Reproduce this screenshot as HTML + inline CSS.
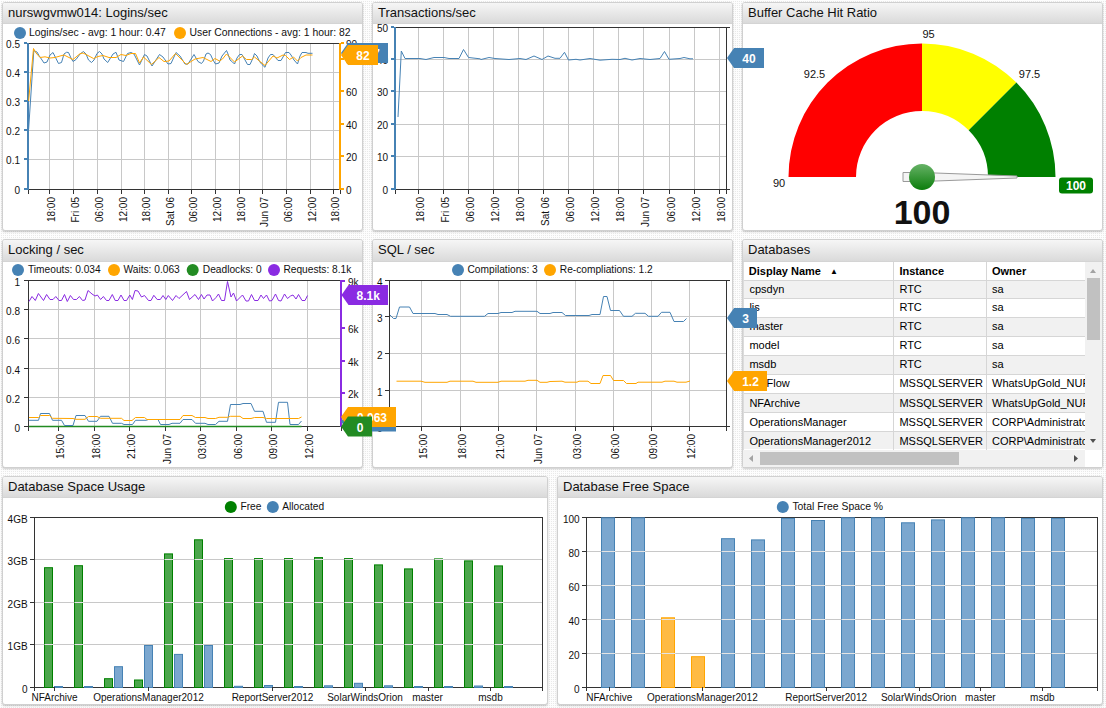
<!DOCTYPE html>
<html><head><meta charset="utf-8">
<style>
html,body{margin:0;padding:0}
body{width:1106px;height:708px;overflow:hidden;position:relative;font-family:"Liberation Sans",sans-serif;
background:#fbfbfb conic-gradient(from 90deg at 1px 1px,#e9e9e9 90deg,#fdfdfd 0) 0 0/2px 2px;}
.p{position:absolute;box-sizing:border-box;border:1px solid #d0d0d0;border-radius:3px;background:#fff;box-shadow:0 1px 2px rgba(0,0,0,.2);overflow:hidden}
.h{position:absolute;left:0;top:0;right:0;height:20px;background:linear-gradient(#f6f6f6,#dadada);border-bottom:1px solid #d4d4d4;font-size:13px;line-height:20px;padding-left:5px;color:#111;white-space:nowrap}
svg text{font-family:"Liberation Sans",sans-serif}
table.t{border-collapse:collapse;table-layout:fixed;font-size:11px;color:#1a1a1a}
table.t td{height:18px;padding:0 0 0 6px;border:1px solid #d6d6d6;border-top:0;white-space:nowrap;overflow:hidden;line-height:18px}
table.t tr td:first-child{border-left:0}
table.t tr.hd td{font-weight:bold;background:#fff}
</style></head><body>
<div class="p" style="left:2px;top:2px;width:361px;height:229px"><div class="h">nurswgvmw014: Logins/sec</div></div>
<div class="p" style="left:372px;top:2px;width:361px;height:229px"><div class="h">Transactions/sec</div></div>
<div class="p" style="left:742px;top:2px;width:361px;height:229px"><div class="h">Buffer Cache Hit Ratio</div></div>
<div class="p" style="left:2px;top:239px;width:361px;height:229px"><div class="h" style="height:21px">Locking / sec</div></div>
<div class="p" style="left:372px;top:239px;width:361px;height:229px"><div class="h" style="height:21px">SQL / sec</div></div>
<div class="p" style="left:742px;top:239px;width:361px;height:229px"><div class="h" style="height:21px">Databases</div></div>
<div class="p" style="left:2px;top:476px;width:546px;height:229px"><div class="h">Database Space Usage</div></div>
<div class="p" style="left:557px;top:476px;width:546px;height:229px"><div class="h">Database Free Space</div></div>
<div style="position:absolute;left:743px;top:262px;width:342px;height:188px;overflow:hidden;background:#fff;font-size:11px;color:#000;box-sizing:border-box;border-left:1px solid #dcdcdc">
<div style="position:absolute;left:4.8px;top:3.1px;font-weight:bold;white-space:nowrap;line-height:12px">Display Name<span style="font-size:8px;margin-left:9px;position:relative;top:-1px">&#9650;</span></div>
<div style="position:absolute;left:155.4px;top:3.1px;font-weight:bold;line-height:12px">Instance</div>
<div style="position:absolute;left:248px;top:3.1px;font-weight:bold;line-height:12px">Owner</div>
<div style="position:absolute;left:0;top:19px;width:341px;height:17px;background:#f1f1f1"></div>
<div style="position:absolute;left:5.4px;top:20.8px;white-space:nowrap;line-height:12px">cpsdyn</div>
<div style="position:absolute;left:155.4px;top:20.8px;white-space:nowrap;line-height:12px">RTC</div>
<div style="position:absolute;left:248.0px;top:20.8px;white-space:nowrap;line-height:12px">sa</div>
<div style="position:absolute;left:5.4px;top:38.9px;white-space:nowrap;line-height:12px">lis</div>
<div style="position:absolute;left:155.4px;top:38.9px;white-space:nowrap;line-height:12px">RTC</div>
<div style="position:absolute;left:248.0px;top:38.9px;white-space:nowrap;line-height:12px">sa</div>
<div style="position:absolute;left:0;top:56px;width:341px;height:18px;background:#f1f1f1"></div>
<div style="position:absolute;left:5.4px;top:58.0px;white-space:nowrap;line-height:12px">master</div>
<div style="position:absolute;left:155.4px;top:58.0px;white-space:nowrap;line-height:12px">RTC</div>
<div style="position:absolute;left:248.0px;top:58.0px;white-space:nowrap;line-height:12px">sa</div>
<div style="position:absolute;left:5.4px;top:77.2px;white-space:nowrap;line-height:12px">model</div>
<div style="position:absolute;left:155.4px;top:77.2px;white-space:nowrap;line-height:12px">RTC</div>
<div style="position:absolute;left:248.0px;top:77.2px;white-space:nowrap;line-height:12px">sa</div>
<div style="position:absolute;left:0;top:94px;width:341px;height:18px;background:#f1f1f1"></div>
<div style="position:absolute;left:5.4px;top:96.3px;white-space:nowrap;line-height:12px">msdb</div>
<div style="position:absolute;left:155.4px;top:96.3px;white-space:nowrap;line-height:12px">RTC</div>
<div style="position:absolute;left:248.0px;top:96.3px;white-space:nowrap;line-height:12px">sa</div>
<div style="position:absolute;left:5.4px;top:115.4px;white-space:nowrap;line-height:12px">NetFlow</div>
<div style="position:absolute;left:155.4px;top:115.4px;white-space:nowrap;line-height:12px">MSSQLSERVER</div>
<div style="position:absolute;left:248.0px;top:115.4px;white-space:nowrap;line-height:12px">WhatsUpGold_NUR</div>
<div style="position:absolute;left:0;top:132px;width:341px;height:18px;background:#f1f1f1"></div>
<div style="position:absolute;left:5.4px;top:134.5px;white-space:nowrap;line-height:12px">NFArchive</div>
<div style="position:absolute;left:155.4px;top:134.5px;white-space:nowrap;line-height:12px">MSSQLSERVER</div>
<div style="position:absolute;left:248.0px;top:134.5px;white-space:nowrap;line-height:12px">WhatsUpGold_NUR</div>
<div style="position:absolute;left:5.4px;top:153.6px;white-space:nowrap;line-height:12px">OperationsManager</div>
<div style="position:absolute;left:155.4px;top:153.6px;white-space:nowrap;line-height:12px">MSSQLSERVER</div>
<div style="position:absolute;left:248.0px;top:153.6px;white-space:nowrap;line-height:12px">CORP\Administrator</div>
<div style="position:absolute;left:0;top:170px;width:341px;height:17px;background:#f1f1f1"></div>
<div style="position:absolute;left:5.4px;top:172.8px;white-space:nowrap;line-height:12px">OperationsManager2012</div>
<div style="position:absolute;left:155.4px;top:172.8px;white-space:nowrap;line-height:12px">MSSQLSERVER</div>
<div style="position:absolute;left:248.0px;top:172.8px;white-space:nowrap;line-height:12px">CORP\Administrator</div>
<div style="position:absolute;left:5.4px;top:190.9px;white-space:nowrap;line-height:12px">ReportServer</div>
<div style="position:absolute;left:155.4px;top:190.9px;white-space:nowrap;line-height:12px">MSSQLSERVER</div>
<div style="position:absolute;left:248.0px;top:190.9px;white-space:nowrap;line-height:12px">CORP\Administrator</div>
<div style="position:absolute;left:0;top:18px;width:342px;height:1px;background:#d6d6d6"></div>
<div style="position:absolute;left:0;top:36px;width:342px;height:1px;background:#d6d6d6"></div>
<div style="position:absolute;left:0;top:55px;width:342px;height:1px;background:#d6d6d6"></div>
<div style="position:absolute;left:0;top:74px;width:342px;height:1px;background:#d6d6d6"></div>
<div style="position:absolute;left:0;top:93px;width:342px;height:1px;background:#d6d6d6"></div>
<div style="position:absolute;left:0;top:112px;width:342px;height:1px;background:#d6d6d6"></div>
<div style="position:absolute;left:0;top:131px;width:342px;height:1px;background:#d6d6d6"></div>
<div style="position:absolute;left:0;top:150px;width:342px;height:1px;background:#d6d6d6"></div>
<div style="position:absolute;left:0;top:169px;width:342px;height:1px;background:#d6d6d6"></div>
<div style="position:absolute;left:149px;top:0;width:1px;height:188px;background:#d6d6d6"></div>
<div style="position:absolute;left:242px;top:0;width:1px;height:188px;background:#d6d6d6"></div>
</div>
<div style="position:absolute;left:1085px;top:262px;width:17px;height:188px;background:#f1f1f1"></div>
<div style="position:absolute;left:1087px;top:278px;width:13px;height:62px;background:#c1c1c1"></div>
<div style="position:absolute;left:743px;top:450px;width:342px;height:17px;background:#f1f1f1"></div>
<div style="position:absolute;left:760px;top:452px;width:199px;height:13px;background:#c1c1c1"></div>
<div style="position:absolute;left:1085px;top:450px;width:17px;height:17px;background:#fff"></div>
<svg style="position:absolute;left:0;top:0" width="1106" height="708">
<polygon points="1090,273 1096,273 1093,269" fill="#a3a3a3"/>
<polygon points="1090,439 1096,439 1093,443" fill="#505050"/>
<polygon points="753,455 753,462 749,458.5" fill="#a3a3a3"/>
<polygon points="1074,455 1074,462 1078,458.5" fill="#505050"/>
</svg>
<svg id="ov" style="position:absolute;left:0;top:0" width="1106" height="708"><circle cx="20" cy="33" r="6" fill="#4682b4"/>
<text x="29.00" y="35.70" font-size="10.4" text-anchor="start" fill="#111" >Logins/sec - avg: 1 hour: 0.47</text>
<circle cx="180" cy="33" r="6" fill="#ffa500"/>
<text x="189.50" y="35.70" font-size="10.4" text-anchor="start" fill="#111" >User Connections - avg: 1 hour: 82</text>
<line x1="28" y1="72.5" x2="340" y2="72.5" stroke="#c8c8c8" stroke-width="1"/>
<line x1="28" y1="101.5" x2="340" y2="101.5" stroke="#c8c8c8" stroke-width="1"/>
<line x1="28" y1="130.5" x2="340" y2="130.5" stroke="#c8c8c8" stroke-width="1"/>
<line x1="28" y1="159.5" x2="340" y2="159.5" stroke="#c8c8c8" stroke-width="1"/>
<line x1="49.5" y1="43" x2="49.5" y2="189" stroke="#c8c8c8" stroke-width="1"/>
<line x1="73.5" y1="43" x2="73.5" y2="189" stroke="#c8c8c8" stroke-width="1"/>
<line x1="97.5" y1="43" x2="97.5" y2="189" stroke="#c8c8c8" stroke-width="1"/>
<line x1="121.5" y1="43" x2="121.5" y2="189" stroke="#c8c8c8" stroke-width="1"/>
<line x1="144.5" y1="43" x2="144.5" y2="189" stroke="#c8c8c8" stroke-width="1"/>
<line x1="168.5" y1="43" x2="168.5" y2="189" stroke="#c8c8c8" stroke-width="1"/>
<line x1="191.5" y1="43" x2="191.5" y2="189" stroke="#c8c8c8" stroke-width="1"/>
<line x1="215.5" y1="43" x2="215.5" y2="189" stroke="#c8c8c8" stroke-width="1"/>
<line x1="239.5" y1="43" x2="239.5" y2="189" stroke="#c8c8c8" stroke-width="1"/>
<line x1="262.5" y1="43" x2="262.5" y2="189" stroke="#c8c8c8" stroke-width="1"/>
<line x1="286.5" y1="43" x2="286.5" y2="189" stroke="#c8c8c8" stroke-width="1"/>
<line x1="310.5" y1="43" x2="310.5" y2="189" stroke="#c8c8c8" stroke-width="1"/>
<line x1="333.5" y1="43" x2="333.5" y2="189" stroke="#c8c8c8" stroke-width="1"/>
<line x1="28" y1="43.5" x2="340" y2="43.5" stroke="#333" stroke-width="1"/>
<line x1="28" y1="189.5" x2="341" y2="189.5" stroke="#333" stroke-width="1"/>
<line x1="28.5" y1="189" x2="28.5" y2="194" stroke="#333" stroke-width="1"/>
<line x1="49.5" y1="189" x2="49.5" y2="194" stroke="#333" stroke-width="1"/>
<line x1="73.5" y1="189" x2="73.5" y2="194" stroke="#333" stroke-width="1"/>
<line x1="97.5" y1="189" x2="97.5" y2="194" stroke="#333" stroke-width="1"/>
<line x1="121.5" y1="189" x2="121.5" y2="194" stroke="#333" stroke-width="1"/>
<line x1="144.5" y1="189" x2="144.5" y2="194" stroke="#333" stroke-width="1"/>
<line x1="168.5" y1="189" x2="168.5" y2="194" stroke="#333" stroke-width="1"/>
<line x1="191.5" y1="189" x2="191.5" y2="194" stroke="#333" stroke-width="1"/>
<line x1="215.5" y1="189" x2="215.5" y2="194" stroke="#333" stroke-width="1"/>
<line x1="239.5" y1="189" x2="239.5" y2="194" stroke="#333" stroke-width="1"/>
<line x1="262.5" y1="189" x2="262.5" y2="194" stroke="#333" stroke-width="1"/>
<line x1="286.5" y1="189" x2="286.5" y2="194" stroke="#333" stroke-width="1"/>
<line x1="310.5" y1="189" x2="310.5" y2="194" stroke="#333" stroke-width="1"/>
<line x1="333.5" y1="189" x2="333.5" y2="194" stroke="#333" stroke-width="1"/>
<line x1="340.5" y1="189" x2="340.5" y2="194" stroke="#333" stroke-width="1"/>
<text transform="translate(54.50,197.00) rotate(-90)" font-size="10" text-anchor="end" fill="#111">18:00</text>
<text transform="translate(78.50,197.00) rotate(-90)" font-size="10" text-anchor="end" fill="#111">Fri 05</text>
<text transform="translate(102.50,197.00) rotate(-90)" font-size="10" text-anchor="end" fill="#111">06:00</text>
<text transform="translate(126.50,197.00) rotate(-90)" font-size="10" text-anchor="end" fill="#111">12:00</text>
<text transform="translate(149.50,197.00) rotate(-90)" font-size="10" text-anchor="end" fill="#111">18:00</text>
<text transform="translate(173.50,197.00) rotate(-90)" font-size="10" text-anchor="end" fill="#111">Sat 06</text>
<text transform="translate(196.50,197.00) rotate(-90)" font-size="10" text-anchor="end" fill="#111">06:00</text>
<text transform="translate(220.50,197.00) rotate(-90)" font-size="10" text-anchor="end" fill="#111">12:00</text>
<text transform="translate(244.50,197.00) rotate(-90)" font-size="10" text-anchor="end" fill="#111">18:00</text>
<text transform="translate(267.50,197.00) rotate(-90)" font-size="10" text-anchor="end" fill="#111">Jun 07</text>
<text transform="translate(291.50,197.00) rotate(-90)" font-size="10" text-anchor="end" fill="#111">06:00</text>
<text transform="translate(315.50,197.00) rotate(-90)" font-size="10" text-anchor="end" fill="#111">12:00</text>
<text transform="translate(338.50,197.00) rotate(-90)" font-size="10" text-anchor="end" fill="#111">18:00</text>
<rect x="27" y="43" width="2" height="147" fill="#4682b4" />
<rect x="24" y="42" width="3" height="2" fill="#4682b4" />
<text x="20.00" y="48.10" font-size="10" text-anchor="end" fill="#111" >0.5</text>
<rect x="24" y="71" width="3" height="2" fill="#4682b4" />
<text x="20.00" y="77.10" font-size="10" text-anchor="end" fill="#111" >0.4</text>
<rect x="24" y="100" width="3" height="2" fill="#4682b4" />
<text x="20.00" y="106.10" font-size="10" text-anchor="end" fill="#111" >0.3</text>
<rect x="24" y="129" width="3" height="2" fill="#4682b4" />
<text x="20.00" y="135.10" font-size="10" text-anchor="end" fill="#111" >0.2</text>
<rect x="24" y="158" width="3" height="2" fill="#4682b4" />
<text x="20.00" y="164.10" font-size="10" text-anchor="end" fill="#111" >0.1</text>
<rect x="24" y="188" width="3" height="2" fill="#4682b4" />
<text x="20.00" y="194.10" font-size="10" text-anchor="end" fill="#111" >0</text>
<rect x="339" y="43" width="2" height="147" fill="#ffa500" />
<rect x="341" y="188" width="3" height="2" fill="#ffa500" />
<text x="346.00" y="193.80" font-size="10" text-anchor="start" fill="#111" >0</text>
<rect x="341" y="155" width="3" height="2" fill="#ffa500" />
<text x="346.00" y="160.80" font-size="10" text-anchor="start" fill="#111" >20</text>
<rect x="341" y="123" width="3" height="2" fill="#ffa500" />
<text x="346.00" y="128.80" font-size="10" text-anchor="start" fill="#111" >40</text>
<rect x="341" y="90" width="3" height="2" fill="#ffa500" />
<text x="346.00" y="95.80" font-size="10" text-anchor="start" fill="#111" >60</text>
<rect x="341" y="58" width="3" height="2" fill="#ffa500" />
<text x="346.00" y="63.80" font-size="10" text-anchor="start" fill="#111" >80</text>
<rect x="341" y="42" width="3" height="2" fill="#ffa500" />
<text x="346.00" y="47.80" font-size="10" text-anchor="start" fill="#111" >90</text>
<polyline points="28.6,129.5 33.8,50.7 37.0,52.0 39.0,55.5 44.0,63.0 47.0,62.0 50.0,55.0 53.0,52.5 55.5,57.5 58.5,63.5 61.5,62.5 64.0,54.0 66.5,52.3 68.5,52.5 71.0,58.0 73.0,61.5 76.0,59.5 80.0,54.0 83.5,51.5 86.0,54.0 88.5,60.0 91.5,62.5 94.0,60.0 97.0,53.5 99.5,51.5 102.0,54.0 104.0,59.0 107.7,62.5 113.0,54.0 116.0,52.3 119.0,60.0 123.5,61.5 127.5,53.5 131.0,52.5 134.0,54.0 139.5,65.0 144.5,54.5 147.0,56.0 152.0,66.0 159.5,54.5 163.0,57.0 168.0,64.0 171.0,63.5 176.0,52.5 180.0,56.0 185.0,64.0 188.0,64.0 194.0,54.5 198.0,61.5 201.5,63.5 203.5,61.0 206.0,54.0 208.0,53.0 210.5,54.5 213.0,60.0 215.5,64.0 219.0,63.0 222.0,56.0 226.5,50.5 228.0,54.0 230.0,60.0 232.5,62.0 234.5,64.0 237.0,58.0 239.5,54.5 242.0,54.5 244.5,59.0 247.5,64.5 250.0,64.5 253.0,58.0 254.5,53.5 257.0,56.0 259.5,61.5 262.0,64.5 265.0,67.3 268.0,58.0 270.5,54.5 273.0,54.5 275.5,57.5 278.0,60.5 281.0,60.5 283.0,57.0 285.5,52.5 289.0,52.5 291.0,55.0 294.0,60.0 297.5,64.0 300.0,56.0 302.0,52.5 306.0,52.5 308.0,53.3 312.5,53.3" fill="none" stroke="#4682b4" stroke-width="1.0" stroke-linejoin="round"/>
<polyline points="28.6,101.0 33.5,48.5 36.0,53.0 40.0,57.5 45.0,56.8 50.0,58.0 55.0,57.5 60.0,56.0 64.0,55.0 73.0,59.5 80.0,53.7 83.0,53.0 87.0,55.0 93.5,58.5 98.0,56.5 103.0,55.5 109.0,57.5 116.0,57.5 121.0,54.5 126.0,55.5 131.0,53.5 135.5,53.5 139.5,63.0 143.5,57.0 151.5,64.5 159.0,57.5 164.0,61.5 169.0,61.0 175.5,53.5 186.5,64.5 195.0,59.0 203.0,57.5 211.0,61.5 215.0,58.5 219.5,61.0 222.5,59.0 226.5,54.0 234.5,62.0 242.5,56.0 246.5,59.5 251.5,59.5 254.5,57.0 265.0,65.5 273.0,56.0 277.0,58.0 283.0,55.0 285.5,55.5 289.5,59.5 293.5,57.0 297.5,61.0 301.0,57.5 306.0,55.0 312.5,55.0" fill="none" stroke="#ffa500" stroke-width="1.0" stroke-linejoin="round"/>
<line x1="395" y1="59.5" x2="726" y2="59.5" stroke="#c8c8c8" stroke-width="1"/>
<line x1="395" y1="91.5" x2="726" y2="91.5" stroke="#c8c8c8" stroke-width="1"/>
<line x1="395" y1="124.5" x2="726" y2="124.5" stroke="#c8c8c8" stroke-width="1"/>
<line x1="395" y1="156.5" x2="726" y2="156.5" stroke="#c8c8c8" stroke-width="1"/>
<line x1="418.5" y1="27" x2="418.5" y2="189" stroke="#c8c8c8" stroke-width="1"/>
<line x1="443.5" y1="27" x2="443.5" y2="189" stroke="#c8c8c8" stroke-width="1"/>
<line x1="468.5" y1="27" x2="468.5" y2="189" stroke="#c8c8c8" stroke-width="1"/>
<line x1="493.5" y1="27" x2="493.5" y2="189" stroke="#c8c8c8" stroke-width="1"/>
<line x1="518.5" y1="27" x2="518.5" y2="189" stroke="#c8c8c8" stroke-width="1"/>
<line x1="543.5" y1="27" x2="543.5" y2="189" stroke="#c8c8c8" stroke-width="1"/>
<line x1="568.5" y1="27" x2="568.5" y2="189" stroke="#c8c8c8" stroke-width="1"/>
<line x1="593.5" y1="27" x2="593.5" y2="189" stroke="#c8c8c8" stroke-width="1"/>
<line x1="618.5" y1="27" x2="618.5" y2="189" stroke="#c8c8c8" stroke-width="1"/>
<line x1="643.5" y1="27" x2="643.5" y2="189" stroke="#c8c8c8" stroke-width="1"/>
<line x1="669.5" y1="27" x2="669.5" y2="189" stroke="#c8c8c8" stroke-width="1"/>
<line x1="694.5" y1="27" x2="694.5" y2="189" stroke="#c8c8c8" stroke-width="1"/>
<line x1="719.5" y1="27" x2="719.5" y2="189" stroke="#c8c8c8" stroke-width="1"/>
<line x1="395" y1="27.5" x2="730" y2="27.5" stroke="#333" stroke-width="1"/>
<line x1="395" y1="189.5" x2="730" y2="189.5" stroke="#333" stroke-width="1"/>
<line x1="726.5" y1="27" x2="726.5" y2="194" stroke="#333" stroke-width="1"/>
<line x1="395.5" y1="189" x2="395.5" y2="194" stroke="#333" stroke-width="1"/>
<line x1="418.5" y1="189" x2="418.5" y2="194" stroke="#333" stroke-width="1"/>
<line x1="443.5" y1="189" x2="443.5" y2="194" stroke="#333" stroke-width="1"/>
<line x1="468.5" y1="189" x2="468.5" y2="194" stroke="#333" stroke-width="1"/>
<line x1="493.5" y1="189" x2="493.5" y2="194" stroke="#333" stroke-width="1"/>
<line x1="518.5" y1="189" x2="518.5" y2="194" stroke="#333" stroke-width="1"/>
<line x1="543.5" y1="189" x2="543.5" y2="194" stroke="#333" stroke-width="1"/>
<line x1="568.5" y1="189" x2="568.5" y2="194" stroke="#333" stroke-width="1"/>
<line x1="593.5" y1="189" x2="593.5" y2="194" stroke="#333" stroke-width="1"/>
<line x1="618.5" y1="189" x2="618.5" y2="194" stroke="#333" stroke-width="1"/>
<line x1="643.5" y1="189" x2="643.5" y2="194" stroke="#333" stroke-width="1"/>
<line x1="669.5" y1="189" x2="669.5" y2="194" stroke="#333" stroke-width="1"/>
<line x1="694.5" y1="189" x2="694.5" y2="194" stroke="#333" stroke-width="1"/>
<line x1="719.5" y1="189" x2="719.5" y2="194" stroke="#333" stroke-width="1"/>
<text transform="translate(423.50,197.00) rotate(-90)" font-size="10" text-anchor="end" fill="#111">18:00</text>
<text transform="translate(448.50,197.00) rotate(-90)" font-size="10" text-anchor="end" fill="#111">Fri 05</text>
<text transform="translate(473.50,197.00) rotate(-90)" font-size="10" text-anchor="end" fill="#111">06:00</text>
<text transform="translate(498.50,197.00) rotate(-90)" font-size="10" text-anchor="end" fill="#111">12:00</text>
<text transform="translate(523.50,197.00) rotate(-90)" font-size="10" text-anchor="end" fill="#111">18:00</text>
<text transform="translate(548.50,197.00) rotate(-90)" font-size="10" text-anchor="end" fill="#111">Sat 06</text>
<text transform="translate(573.50,197.00) rotate(-90)" font-size="10" text-anchor="end" fill="#111">06:00</text>
<text transform="translate(598.50,197.00) rotate(-90)" font-size="10" text-anchor="end" fill="#111">12:00</text>
<text transform="translate(623.50,197.00) rotate(-90)" font-size="10" text-anchor="end" fill="#111">18:00</text>
<text transform="translate(648.50,197.00) rotate(-90)" font-size="10" text-anchor="end" fill="#111">Jun 07</text>
<text transform="translate(674.50,197.00) rotate(-90)" font-size="10" text-anchor="end" fill="#111">06:00</text>
<text transform="translate(699.50,197.00) rotate(-90)" font-size="10" text-anchor="end" fill="#111">12:00</text>
<text transform="translate(724.50,197.00) rotate(-90)" font-size="10" text-anchor="end" fill="#111">18:00</text>
<rect x="394" y="27" width="2" height="163" fill="#4682b4" />
<rect x="391" y="26" width="3" height="2" fill="#4682b4" />
<text x="388.00" y="31.60" font-size="10" text-anchor="end" fill="#111" >50</text>
<rect x="391" y="58" width="3" height="2" fill="#4682b4" />
<text x="388.00" y="63.60" font-size="10" text-anchor="end" fill="#111" >40</text>
<rect x="391" y="90" width="3" height="2" fill="#4682b4" />
<text x="388.00" y="95.60" font-size="10" text-anchor="end" fill="#111" >30</text>
<rect x="391" y="123" width="3" height="2" fill="#4682b4" />
<text x="388.00" y="128.60" font-size="10" text-anchor="end" fill="#111" >20</text>
<rect x="391" y="155" width="3" height="2" fill="#4682b4" />
<text x="388.00" y="160.60" font-size="10" text-anchor="end" fill="#111" >10</text>
<rect x="391" y="188" width="3" height="2" fill="#4682b4" />
<text x="388.00" y="193.60" font-size="10" text-anchor="end" fill="#111" >0</text>
<polyline points="398.0,117.0 401.3,51.0 405.0,58.5 420.0,58.5 426.0,59.5 434.0,57.5 444.0,57.5 449.0,58.5 459.0,58.5 463.5,49.5 468.5,57.5 480.0,58.8 481.0,59.5 489.0,57.5 495.0,58.5 509.0,59.5 520.0,58.5 526.0,59.5 534.0,56.0 542.0,59.5 548.0,56.0 555.0,58.3 560.0,58.3 564.5,52.3 568.5,60.0 576.0,59.3 580.0,60.0 590.0,58.5 600.0,60.2 612.0,59.3 620.0,59.5 625.0,58.3 632.0,60.0 640.0,58.5 650.0,59.5 660.0,58.5 664.5,51.5 669.0,59.3 680.0,58.5 684.0,57.5 690.0,58.8 693.0,58.8" fill="none" stroke="#4682b4" stroke-width="1.0" stroke-linejoin="round"/>
<path d="M788.50,177.00 A133.5,133.5 0 0 1 922.00,43.50 L922.00,111.00 A66,66 0 0 0 856.00,177.00 Z" fill="#ff0000"/>
<path d="M922.00,43.50 A133.5,133.5 0 0 1 1016.40,82.60 L968.67,130.33 A66,66 0 0 0 922.00,111.00 Z" fill="#ffff00"/>
<path d="M1016.40,82.60 A133.5,133.5 0 0 1 1055.50,177.00 L988.00,177.00 A66,66 0 0 0 968.67,130.33 Z" fill="#008000"/>
<text x="779.00" y="187.00" font-size="11" text-anchor="middle" fill="#111" >90</text>
<text x="814.50" y="77.80" font-size="11" text-anchor="middle" fill="#111" >92.5</text>
<text x="928.50" y="37.70" font-size="11" text-anchor="middle" fill="#111" >95</text>
<text x="1029.50" y="78.00" font-size="11" text-anchor="middle" fill="#111" >97.5</text>
<polygon points="903,172.5 922,172.5 1017,176 1017,178 922,181.5 903,181.5" fill="#f4f4f4" stroke="#9a9a9a" stroke-width="1"/>
<defs><linearGradient id="gp" x1="0" y1="0" x2="0" y2="1"><stop offset="0" stop-color="#66b266"/><stop offset="1" stop-color="#0b7d0b"/></linearGradient></defs>
<circle cx="922" cy="177" r="13" fill="url(#gp)"/>
<text x="922.00" y="224.00" font-size="34" text-anchor="middle" fill="#111" font-weight="bold" >100</text>
<rect x="1059" y="177.5" width="34" height="16" rx="3" fill="#008000"/>
<text x="1076.00" y="190.00" font-size="12" text-anchor="middle" fill="#fff" font-weight="bold" >100</text>
<circle cx="18" cy="270" r="6" fill="#4682b4"/>
<text x="28.00" y="273.00" font-size="10.2" text-anchor="start" fill="#111" >Timeouts: 0.034</text>
<circle cx="114" cy="270" r="6" fill="#ffa500"/>
<text x="123.50" y="273.00" font-size="10.2" text-anchor="start" fill="#111" >Waits: 0.063</text>
<circle cx="192.7" cy="270" r="6" fill="#228b22"/>
<text x="202.80" y="273.00" font-size="10.2" text-anchor="start" fill="#111" >Deadlocks: 0</text>
<circle cx="274" cy="270" r="6" fill="#8a2be2"/>
<text x="283.40" y="273.00" font-size="10.2" text-anchor="start" fill="#111" >Requests: 8.1k</text>
<line x1="28" y1="309.5" x2="341" y2="309.5" stroke="#c8c8c8" stroke-width="1"/>
<line x1="28" y1="338.5" x2="341" y2="338.5" stroke="#c8c8c8" stroke-width="1"/>
<line x1="28" y1="368.5" x2="341" y2="368.5" stroke="#c8c8c8" stroke-width="1"/>
<line x1="28" y1="397.5" x2="341" y2="397.5" stroke="#c8c8c8" stroke-width="1"/>
<line x1="58.5" y1="280" x2="58.5" y2="426" stroke="#c8c8c8" stroke-width="1"/>
<line x1="94.5" y1="280" x2="94.5" y2="426" stroke="#c8c8c8" stroke-width="1"/>
<line x1="129.5" y1="280" x2="129.5" y2="426" stroke="#c8c8c8" stroke-width="1"/>
<line x1="165.5" y1="280" x2="165.5" y2="426" stroke="#c8c8c8" stroke-width="1"/>
<line x1="200.5" y1="280" x2="200.5" y2="426" stroke="#c8c8c8" stroke-width="1"/>
<line x1="236.5" y1="280" x2="236.5" y2="426" stroke="#c8c8c8" stroke-width="1"/>
<line x1="271.5" y1="280" x2="271.5" y2="426" stroke="#c8c8c8" stroke-width="1"/>
<line x1="307.5" y1="280" x2="307.5" y2="426" stroke="#c8c8c8" stroke-width="1"/>
<line x1="28" y1="280.5" x2="341" y2="280.5" stroke="#333" stroke-width="1"/>
<line x1="28" y1="426.5" x2="342" y2="426.5" stroke="#333" stroke-width="1"/>
<line x1="28.5" y1="280" x2="28.5" y2="427" stroke="#333" stroke-width="1"/>
<line x1="28.5" y1="426" x2="28.5" y2="431" stroke="#333" stroke-width="1"/>
<line x1="58.5" y1="426" x2="58.5" y2="431" stroke="#333" stroke-width="1"/>
<line x1="94.5" y1="426" x2="94.5" y2="431" stroke="#333" stroke-width="1"/>
<line x1="129.5" y1="426" x2="129.5" y2="431" stroke="#333" stroke-width="1"/>
<line x1="165.5" y1="426" x2="165.5" y2="431" stroke="#333" stroke-width="1"/>
<line x1="200.5" y1="426" x2="200.5" y2="431" stroke="#333" stroke-width="1"/>
<line x1="236.5" y1="426" x2="236.5" y2="431" stroke="#333" stroke-width="1"/>
<line x1="271.5" y1="426" x2="271.5" y2="431" stroke="#333" stroke-width="1"/>
<line x1="307.5" y1="426" x2="307.5" y2="431" stroke="#333" stroke-width="1"/>
<line x1="341.5" y1="426" x2="341.5" y2="431" stroke="#333" stroke-width="1"/>
<text transform="translate(63.50,434.00) rotate(-90)" font-size="10" text-anchor="end" fill="#111">15:00</text>
<text transform="translate(99.50,434.00) rotate(-90)" font-size="10" text-anchor="end" fill="#111">18:00</text>
<text transform="translate(134.50,434.00) rotate(-90)" font-size="10" text-anchor="end" fill="#111">21:00</text>
<text transform="translate(170.50,434.00) rotate(-90)" font-size="10" text-anchor="end" fill="#111">Jun 07</text>
<text transform="translate(205.50,434.00) rotate(-90)" font-size="10" text-anchor="end" fill="#111">03:00</text>
<text transform="translate(241.50,434.00) rotate(-90)" font-size="10" text-anchor="end" fill="#111">06:00</text>
<text transform="translate(276.50,434.00) rotate(-90)" font-size="10" text-anchor="end" fill="#111">09:00</text>
<text transform="translate(312.50,434.00) rotate(-90)" font-size="10" text-anchor="end" fill="#111">12:00</text>
<line x1="24" y1="280.5" x2="28" y2="280.5" stroke="#333" stroke-width="1"/>
<text x="20.00" y="285.60" font-size="10" text-anchor="end" fill="#111" >1</text>
<line x1="24" y1="309.5" x2="28" y2="309.5" stroke="#333" stroke-width="1"/>
<text x="20.00" y="314.60" font-size="10" text-anchor="end" fill="#111" >0.8</text>
<line x1="24" y1="338.5" x2="28" y2="338.5" stroke="#333" stroke-width="1"/>
<text x="20.00" y="343.60" font-size="10" text-anchor="end" fill="#111" >0.6</text>
<line x1="24" y1="368.5" x2="28" y2="368.5" stroke="#333" stroke-width="1"/>
<text x="20.00" y="373.60" font-size="10" text-anchor="end" fill="#111" >0.4</text>
<line x1="24" y1="397.5" x2="28" y2="397.5" stroke="#333" stroke-width="1"/>
<text x="20.00" y="402.60" font-size="10" text-anchor="end" fill="#111" >0.2</text>
<line x1="24" y1="426.5" x2="28" y2="426.5" stroke="#333" stroke-width="1"/>
<text x="20.00" y="431.60" font-size="10" text-anchor="end" fill="#111" >0</text>
<rect x="340" y="280" width="2" height="147" fill="#8a2be2" />
<rect x="342" y="280" width="3" height="2" fill="#8a2be2" />
<text x="348.00" y="285.60" font-size="10" text-anchor="start" fill="#111" >9k</text>
<rect x="342" y="294" width="3" height="2" fill="#8a2be2" />
<rect x="342" y="327" width="3" height="2" fill="#8a2be2" />
<text x="348.00" y="332.60" font-size="10" text-anchor="start" fill="#111" >6k</text>
<rect x="342" y="360" width="3" height="2" fill="#8a2be2" />
<text x="348.00" y="365.60" font-size="10" text-anchor="start" fill="#111" >4k</text>
<rect x="342" y="392" width="3" height="2" fill="#8a2be2" />
<text x="348.00" y="397.60" font-size="10" text-anchor="start" fill="#111" >2k</text>
<rect x="342" y="425" width="3" height="2" fill="#8a2be2" />
<line x1="29" y1="426.5" x2="301.5" y2="426.5" stroke="#228b22" stroke-width="1.3"/>
<polyline points="29.0,301.5 32.0,296.5 35.3,300.5 38.4,293.5 43.5,300.5 46.6,294.5 50.0,299.5 53.0,299.5 55.8,296.5 59.0,300.5 61.5,300.5 64.5,294.5 67.3,301.5 70.4,295.5 73.5,299.5 76.5,299.5 79.4,296.5 82.6,300.5 85.0,300.0 88.0,290.5 92.0,294.0 95.0,296.0 97.4,295.0 100.6,299.5 103.4,296.5 106.5,300.5 109.0,300.5 112.3,294.5 115.2,300.5 118.0,300.5 121.0,295.0 124.0,300.5 126.6,300.5 129.8,295.0 132.4,299.5 135.0,290.5 138.0,291.0 141.5,297.0 144.5,295.5 148.5,300.5 151.0,300.5 153.8,295.3 157.2,299.5 160.3,299.5 163.0,295.5 165.8,299.5 168.3,295.5 172.5,300.5 176.0,295.5 179.0,298.5 186.5,291.5 189.5,299.5 195.0,294.5 198.5,299.5 201.5,294.5 204.0,299.0 207.0,295.0 210.0,295.0 212.5,301.0 216.0,297.5 218.5,294.0 221.5,300.5 224.5,300.5 227.5,281.5 231.0,297.0 233.5,293.0 236.5,301.0 242.5,295.0 246.0,301.0 248.5,301.0 251.5,294.5 254.5,300.5 258.0,300.5 261.0,295.0 263.5,298.5 266.5,295.0 269.5,301.0 272.0,300.5 275.5,294.0 278.5,300.5 281.0,301.0 284.5,294.0 287.5,298.5 290.5,296.0 293.0,295.0 296.0,299.0 298.5,294.5 302.0,300.5 305.0,300.5 307.5,295.5" fill="none" stroke="#8a2be2" stroke-width="1.0" stroke-linejoin="round"/>
<polyline points="29.0,420.3 38.5,420.3 40.5,413.5 49.5,413.5 52.5,420.3 61.5,420.3 64.5,425.5 73.0,425.5 76.0,415.5 85.0,415.5 88.5,421.3 97.0,421.3 100.5,416.3 109.0,416.3 112.5,423.3 121.5,423.3 124.0,424.5 132.5,424.5 135.5,420.3 146.0,420.3 148.5,419.5 158.0,419.5 160.5,424.5 169.0,424.5 172.0,423.3 180.0,423.3 183.0,419.5 192.0,419.5 195.5,423.3 205.0,423.3 208.0,424.5 215.5,424.5 219.0,421.3 227.5,421.3 230.5,404.5 240.0,404.5 243.0,403.5 251.0,403.5 254.5,411.3 263.0,411.3 266.5,422.3 275.5,422.3 278.5,402.3 287.5,402.3 290.0,424.5 298.5,424.5 301.5,421.0" fill="none" stroke="#4682b4" stroke-width="1.0" stroke-linejoin="round"/>
<polyline points="29.0,417.5 38.5,417.5 40.5,415.5 49.5,415.5 52.5,418.3 73.0,418.5 76.0,419.3 85.0,419.3 88.5,416.5 97.0,416.5 100.5,418.3 121.5,418.3 124.0,420.5 132.0,420.5 135.5,417.5 144.5,417.5 147.0,419.5 180.0,419.5 183.0,415.5 192.0,415.5 195.5,417.5 205.0,417.5 208.0,418.5 215.5,418.5 219.0,417.3 227.5,417.3 230.5,416.3 240.0,416.3 243.0,418.5 251.0,418.5 254.5,417.5 263.0,417.5 266.5,418.5 298.5,418.5 301.5,417.0" fill="none" stroke="#ffa500" stroke-width="1.0" stroke-linejoin="round"/>
<circle cx="458" cy="270" r="6" fill="#4682b4"/>
<text x="467.50" y="273.00" font-size="10.2" text-anchor="start" fill="#111" >Compilations: 3</text>
<circle cx="550" cy="270" r="6" fill="#ffa500"/>
<text x="559.80" y="273.00" font-size="10.2" text-anchor="start" fill="#111" >Re-compliations: 1.2</text>
<line x1="389" y1="316.5" x2="726" y2="316.5" stroke="#c8c8c8" stroke-width="1"/>
<line x1="389" y1="353.5" x2="726" y2="353.5" stroke="#c8c8c8" stroke-width="1"/>
<line x1="389" y1="390.5" x2="726" y2="390.5" stroke="#c8c8c8" stroke-width="1"/>
<line x1="421.5" y1="280" x2="421.5" y2="426" stroke="#c8c8c8" stroke-width="1"/>
<line x1="460.5" y1="280" x2="460.5" y2="426" stroke="#c8c8c8" stroke-width="1"/>
<line x1="498.5" y1="280" x2="498.5" y2="426" stroke="#c8c8c8" stroke-width="1"/>
<line x1="536.5" y1="280" x2="536.5" y2="426" stroke="#c8c8c8" stroke-width="1"/>
<line x1="575.5" y1="280" x2="575.5" y2="426" stroke="#c8c8c8" stroke-width="1"/>
<line x1="613.5" y1="280" x2="613.5" y2="426" stroke="#c8c8c8" stroke-width="1"/>
<line x1="651.5" y1="280" x2="651.5" y2="426" stroke="#c8c8c8" stroke-width="1"/>
<line x1="689.5" y1="280" x2="689.5" y2="426" stroke="#c8c8c8" stroke-width="1"/>
<line x1="389" y1="280.5" x2="730" y2="280.5" stroke="#333" stroke-width="1"/>
<line x1="389" y1="426.5" x2="730" y2="426.5" stroke="#333" stroke-width="1"/>
<line x1="389.5" y1="280" x2="389.5" y2="427" stroke="#333" stroke-width="1"/>
<line x1="726.5" y1="280" x2="726.5" y2="431" stroke="#333" stroke-width="1"/>
<line x1="421.5" y1="426" x2="421.5" y2="431" stroke="#333" stroke-width="1"/>
<line x1="460.5" y1="426" x2="460.5" y2="431" stroke="#333" stroke-width="1"/>
<line x1="498.5" y1="426" x2="498.5" y2="431" stroke="#333" stroke-width="1"/>
<line x1="536.5" y1="426" x2="536.5" y2="431" stroke="#333" stroke-width="1"/>
<line x1="575.5" y1="426" x2="575.5" y2="431" stroke="#333" stroke-width="1"/>
<line x1="613.5" y1="426" x2="613.5" y2="431" stroke="#333" stroke-width="1"/>
<line x1="651.5" y1="426" x2="651.5" y2="431" stroke="#333" stroke-width="1"/>
<line x1="689.5" y1="426" x2="689.5" y2="431" stroke="#333" stroke-width="1"/>
<text transform="translate(426.50,434.00) rotate(-90)" font-size="10" text-anchor="end" fill="#111">15:00</text>
<text transform="translate(465.50,434.00) rotate(-90)" font-size="10" text-anchor="end" fill="#111">18:00</text>
<text transform="translate(503.50,434.00) rotate(-90)" font-size="10" text-anchor="end" fill="#111">21:00</text>
<text transform="translate(541.50,434.00) rotate(-90)" font-size="10" text-anchor="end" fill="#111">Jun 07</text>
<text transform="translate(580.50,434.00) rotate(-90)" font-size="10" text-anchor="end" fill="#111">03:00</text>
<text transform="translate(618.50,434.00) rotate(-90)" font-size="10" text-anchor="end" fill="#111">06:00</text>
<text transform="translate(656.50,434.00) rotate(-90)" font-size="10" text-anchor="end" fill="#111">09:00</text>
<text transform="translate(694.50,434.00) rotate(-90)" font-size="10" text-anchor="end" fill="#111">12:00</text>
<line x1="385" y1="280.5" x2="389" y2="280.5" stroke="#333" stroke-width="1"/>
<text x="382.50" y="286.00" font-size="10" text-anchor="end" fill="#111" >4</text>
<line x1="385" y1="316.5" x2="389" y2="316.5" stroke="#333" stroke-width="1"/>
<text x="382.50" y="322.00" font-size="10" text-anchor="end" fill="#111" >3</text>
<line x1="385" y1="353.5" x2="389" y2="353.5" stroke="#333" stroke-width="1"/>
<text x="382.50" y="359.00" font-size="10" text-anchor="end" fill="#111" >2</text>
<line x1="385" y1="390.5" x2="389" y2="390.5" stroke="#333" stroke-width="1"/>
<text x="382.50" y="396.00" font-size="10" text-anchor="end" fill="#111" >1</text>
<line x1="385" y1="426.5" x2="389" y2="426.5" stroke="#333" stroke-width="1"/>
<text x="382.50" y="432.00" font-size="10" text-anchor="end" fill="#111" >0</text>
<polyline points="390.0,315.0 393.5,318.5 396.0,318.5 399.5,307.0 409.5,307.0 413.0,313.5 435.0,313.5 438.0,314.5 447.0,314.5 450.5,316.3 484.5,316.3 488.0,313.5 498.0,313.5 501.0,312.5 512.0,312.5 515.0,311.3 537.0,311.3 540.0,313.5 550.0,313.5 553.0,312.5 562.0,312.5 565.5,315.5 589.0,315.5 592.0,314.5 600.0,314.5 603.5,296.5 607.0,296.5 610.5,310.5 619.5,310.5 623.5,316.3 632.0,316.3 635.5,313.3 645.0,313.3 648.5,316.3 658.0,316.3 661.5,312.3 670.0,312.3 674.0,321.5 683.5,321.5 686.5,318.5" fill="none" stroke="#4682b4" stroke-width="1.0" stroke-linejoin="round"/>
<polyline points="396.5,381.2 421.0,381.2 425.0,382.3 447.0,382.3 450.0,381.2 473.0,381.2 476.0,382.3 498.0,382.3 501.0,381.2 525.0,381.2 528.0,380.3 537.0,380.3 540.0,382.3 547.0,382.3 550.0,381.5 562.0,381.2 565.0,382.2 577.0,382.2 579.0,381.2 588.0,381.2 591.0,383.5 600.0,383.5 603.0,375.5 610.5,375.5 613.5,380.5 623.5,380.5 626.5,383.5 636.0,383.5 638.0,382.2 662.0,382.2 665.0,381.2 674.0,381.2 677.0,382.2 686.0,382.2 690.0,381.0" fill="none" stroke="#ffa500" stroke-width="1.0" stroke-linejoin="round"/>
<circle cx="230.8" cy="507" r="6" fill="#008000"/>
<text x="240.50" y="510.00" font-size="10.2" text-anchor="start" fill="#111" >Free</text>
<circle cx="272.8" cy="507" r="6" fill="#4682b4"/>
<text x="282.20" y="510.00" font-size="10.2" text-anchor="start" fill="#111" >Allocated</text>
<line x1="34" y1="644.5" x2="542" y2="644.5" stroke="#c8c8c8" stroke-width="1"/>
<line x1="34" y1="602.5" x2="542" y2="602.5" stroke="#c8c8c8" stroke-width="1"/>
<line x1="34" y1="559.5" x2="542" y2="559.5" stroke="#c8c8c8" stroke-width="1"/>
<line x1="34" y1="517.5" x2="542" y2="517.5" stroke="#333" stroke-width="1"/>
<line x1="34" y1="687.5" x2="542" y2="687.5" stroke="#333" stroke-width="1"/>
<line x1="34.5" y1="517" x2="34.5" y2="691" stroke="#333" stroke-width="1"/>
<line x1="542.5" y1="517" x2="542.5" y2="691" stroke="#333" stroke-width="1"/>
<line x1="30" y1="687.5" x2="34" y2="687.5" stroke="#333" stroke-width="1"/>
<text x="27.60" y="692.80" font-size="10" text-anchor="end" fill="#111" >0</text>
<line x1="30" y1="644.5" x2="34" y2="644.5" stroke="#333" stroke-width="1"/>
<text x="27.60" y="649.80" font-size="10" text-anchor="end" fill="#111" >1GB</text>
<line x1="30" y1="602.5" x2="34" y2="602.5" stroke="#333" stroke-width="1"/>
<text x="27.60" y="607.80" font-size="10" text-anchor="end" fill="#111" >2GB</text>
<line x1="30" y1="559.5" x2="34" y2="559.5" stroke="#333" stroke-width="1"/>
<text x="27.60" y="564.80" font-size="10" text-anchor="end" fill="#111" >3GB</text>
<line x1="30" y1="517.5" x2="34" y2="517.5" stroke="#333" stroke-width="1"/>
<text x="27.60" y="522.80" font-size="10" text-anchor="end" fill="#111" >4GB</text>
<rect x="44.5" y="567.7" width="8" height="119.8" fill="#4ca64c" stroke="#008000" stroke-width="1"/>
<rect x="54.5" y="686.5" width="8" height="1.0" fill="#7ba7cf" stroke="#4682b4" stroke-width="1"/>
<rect x="74.5" y="565.7" width="8" height="121.8" fill="#4ca64c" stroke="#008000" stroke-width="1"/>
<rect x="84.5" y="686.5" width="8" height="1.0" fill="#7ba7cf" stroke="#4682b4" stroke-width="1"/>
<rect x="104.5" y="678.7" width="8" height="8.8" fill="#4ca64c" stroke="#008000" stroke-width="1"/>
<rect x="114.5" y="666.7" width="8" height="20.8" fill="#7ba7cf" stroke="#4682b4" stroke-width="1"/>
<rect x="134.5" y="680.0" width="8" height="7.5" fill="#4ca64c" stroke="#008000" stroke-width="1"/>
<rect x="144.5" y="645.5" width="8" height="42.0" fill="#7ba7cf" stroke="#4682b4" stroke-width="1"/>
<rect x="164.5" y="553.9" width="8" height="133.6" fill="#4ca64c" stroke="#008000" stroke-width="1"/>
<rect x="174.5" y="654.4" width="8" height="33.1" fill="#7ba7cf" stroke="#4682b4" stroke-width="1"/>
<rect x="194.5" y="539.8" width="8" height="147.7" fill="#4ca64c" stroke="#008000" stroke-width="1"/>
<rect x="204.5" y="645.5" width="8" height="42.0" fill="#7ba7cf" stroke="#4682b4" stroke-width="1"/>
<rect x="224.5" y="558.6" width="8" height="128.9" fill="#4ca64c" stroke="#008000" stroke-width="1"/>
<rect x="234.5" y="686.3" width="8" height="1.2" fill="#7ba7cf" stroke="#4682b4" stroke-width="1"/>
<rect x="254.5" y="558.6" width="8" height="128.9" fill="#4ca64c" stroke="#008000" stroke-width="1"/>
<rect x="264.5" y="685.5" width="8" height="2.0" fill="#7ba7cf" stroke="#4682b4" stroke-width="1"/>
<rect x="284.5" y="558.6" width="8" height="128.9" fill="#4ca64c" stroke="#008000" stroke-width="1"/>
<rect x="294.5" y="686.5" width="8" height="1.0" fill="#7ba7cf" stroke="#4682b4" stroke-width="1"/>
<rect x="314.5" y="557.6" width="8" height="129.9" fill="#4ca64c" stroke="#008000" stroke-width="1"/>
<rect x="324.5" y="685.8" width="8" height="1.7" fill="#7ba7cf" stroke="#4682b4" stroke-width="1"/>
<rect x="344.5" y="558.6" width="8" height="128.9" fill="#4ca64c" stroke="#008000" stroke-width="1"/>
<rect x="354.5" y="683.3" width="8" height="4.2" fill="#7ba7cf" stroke="#4682b4" stroke-width="1"/>
<rect x="374.5" y="564.9" width="8" height="122.6" fill="#4ca64c" stroke="#008000" stroke-width="1"/>
<rect x="384.5" y="685.8" width="8" height="1.7" fill="#7ba7cf" stroke="#4682b4" stroke-width="1"/>
<rect x="404.5" y="568.9" width="8" height="118.6" fill="#4ca64c" stroke="#008000" stroke-width="1"/>
<rect x="414.5" y="686.5" width="8" height="1.0" fill="#7ba7cf" stroke="#4682b4" stroke-width="1"/>
<rect x="434.5" y="558.9" width="8" height="128.6" fill="#4ca64c" stroke="#008000" stroke-width="1"/>
<rect x="444.5" y="686.5" width="8" height="1.0" fill="#7ba7cf" stroke="#4682b4" stroke-width="1"/>
<rect x="464.5" y="560.9" width="8" height="126.6" fill="#4ca64c" stroke="#008000" stroke-width="1"/>
<rect x="474.5" y="686.0" width="8" height="1.5" fill="#7ba7cf" stroke="#4682b4" stroke-width="1"/>
<rect x="494.5" y="565.9" width="8" height="121.6" fill="#4ca64c" stroke="#008000" stroke-width="1"/>
<rect x="504.5" y="686.5" width="8" height="1.0" fill="#7ba7cf" stroke="#4682b4" stroke-width="1"/>
<line x1="44.5" y1="644.5" x2="53.5" y2="644.5" stroke="#e4e4e4" stroke-width="1"/>
<line x1="74.5" y1="644.5" x2="83.5" y2="644.5" stroke="#e4e4e4" stroke-width="1"/>
<line x1="164.5" y1="644.5" x2="173.5" y2="644.5" stroke="#e4e4e4" stroke-width="1"/>
<line x1="194.5" y1="644.5" x2="203.5" y2="644.5" stroke="#e4e4e4" stroke-width="1"/>
<line x1="224.5" y1="644.5" x2="233.5" y2="644.5" stroke="#e4e4e4" stroke-width="1"/>
<line x1="254.5" y1="644.5" x2="263.5" y2="644.5" stroke="#e4e4e4" stroke-width="1"/>
<line x1="284.5" y1="644.5" x2="293.5" y2="644.5" stroke="#e4e4e4" stroke-width="1"/>
<line x1="314.5" y1="644.5" x2="323.5" y2="644.5" stroke="#e4e4e4" stroke-width="1"/>
<line x1="344.5" y1="644.5" x2="353.5" y2="644.5" stroke="#e4e4e4" stroke-width="1"/>
<line x1="374.5" y1="644.5" x2="383.5" y2="644.5" stroke="#e4e4e4" stroke-width="1"/>
<line x1="404.5" y1="644.5" x2="413.5" y2="644.5" stroke="#e4e4e4" stroke-width="1"/>
<line x1="434.5" y1="644.5" x2="443.5" y2="644.5" stroke="#e4e4e4" stroke-width="1"/>
<line x1="464.5" y1="644.5" x2="473.5" y2="644.5" stroke="#e4e4e4" stroke-width="1"/>
<line x1="494.5" y1="644.5" x2="503.5" y2="644.5" stroke="#e4e4e4" stroke-width="1"/>
<line x1="44.5" y1="602.5" x2="53.5" y2="602.5" stroke="#e4e4e4" stroke-width="1"/>
<line x1="74.5" y1="602.5" x2="83.5" y2="602.5" stroke="#e4e4e4" stroke-width="1"/>
<line x1="164.5" y1="602.5" x2="173.5" y2="602.5" stroke="#e4e4e4" stroke-width="1"/>
<line x1="194.5" y1="602.5" x2="203.5" y2="602.5" stroke="#e4e4e4" stroke-width="1"/>
<line x1="224.5" y1="602.5" x2="233.5" y2="602.5" stroke="#e4e4e4" stroke-width="1"/>
<line x1="254.5" y1="602.5" x2="263.5" y2="602.5" stroke="#e4e4e4" stroke-width="1"/>
<line x1="284.5" y1="602.5" x2="293.5" y2="602.5" stroke="#e4e4e4" stroke-width="1"/>
<line x1="314.5" y1="602.5" x2="323.5" y2="602.5" stroke="#e4e4e4" stroke-width="1"/>
<line x1="344.5" y1="602.5" x2="353.5" y2="602.5" stroke="#e4e4e4" stroke-width="1"/>
<line x1="374.5" y1="602.5" x2="383.5" y2="602.5" stroke="#e4e4e4" stroke-width="1"/>
<line x1="404.5" y1="602.5" x2="413.5" y2="602.5" stroke="#e4e4e4" stroke-width="1"/>
<line x1="434.5" y1="602.5" x2="443.5" y2="602.5" stroke="#e4e4e4" stroke-width="1"/>
<line x1="464.5" y1="602.5" x2="473.5" y2="602.5" stroke="#e4e4e4" stroke-width="1"/>
<line x1="494.5" y1="602.5" x2="503.5" y2="602.5" stroke="#e4e4e4" stroke-width="1"/>
<line x1="164.5" y1="559.5" x2="173.5" y2="559.5" stroke="#e4e4e4" stroke-width="1"/>
<line x1="194.5" y1="559.5" x2="203.5" y2="559.5" stroke="#e4e4e4" stroke-width="1"/>
<line x1="224.5" y1="559.5" x2="233.5" y2="559.5" stroke="#e4e4e4" stroke-width="1"/>
<line x1="254.5" y1="559.5" x2="263.5" y2="559.5" stroke="#e4e4e4" stroke-width="1"/>
<line x1="284.5" y1="559.5" x2="293.5" y2="559.5" stroke="#e4e4e4" stroke-width="1"/>
<line x1="314.5" y1="559.5" x2="323.5" y2="559.5" stroke="#e4e4e4" stroke-width="1"/>
<line x1="344.5" y1="559.5" x2="353.5" y2="559.5" stroke="#e4e4e4" stroke-width="1"/>
<line x1="434.5" y1="559.5" x2="443.5" y2="559.5" stroke="#e4e4e4" stroke-width="1"/>
<line x1="54.5" y1="687" x2="54.5" y2="691" stroke="#333" stroke-width="1"/>
<text x="54.50" y="701.00" font-size="10" text-anchor="middle" fill="#111" >NFArchive</text>
<line x1="148.5" y1="687" x2="148.5" y2="691" stroke="#333" stroke-width="1"/>
<text x="148.50" y="701.00" font-size="10" text-anchor="middle" fill="#111" >OperationsManager2012</text>
<line x1="272.5" y1="687" x2="272.5" y2="691" stroke="#333" stroke-width="1"/>
<text x="272.50" y="701.00" font-size="10" text-anchor="middle" fill="#111" >ReportServer2012</text>
<line x1="365.5" y1="687" x2="365.5" y2="691" stroke="#333" stroke-width="1"/>
<text x="365.00" y="701.00" font-size="10" text-anchor="middle" fill="#111" >SolarWindsOrion</text>
<line x1="428.5" y1="687" x2="428.5" y2="691" stroke="#333" stroke-width="1"/>
<text x="427.50" y="701.00" font-size="10" text-anchor="middle" fill="#111" >master</text>
<line x1="490.5" y1="687" x2="490.5" y2="691" stroke="#333" stroke-width="1"/>
<text x="490.50" y="701.00" font-size="10" text-anchor="middle" fill="#111" >msdb</text>
<circle cx="782.8" cy="507" r="6" fill="#4682b4"/>
<text x="792.40" y="510.00" font-size="10.4" text-anchor="start" fill="#111" >Total Free Space %</text>
<line x1="586" y1="653.5" x2="1097" y2="653.5" stroke="#c8c8c8" stroke-width="1"/>
<line x1="586" y1="619.5" x2="1097" y2="619.5" stroke="#c8c8c8" stroke-width="1"/>
<line x1="586" y1="585.5" x2="1097" y2="585.5" stroke="#c8c8c8" stroke-width="1"/>
<line x1="586" y1="551.5" x2="1097" y2="551.5" stroke="#c8c8c8" stroke-width="1"/>
<line x1="586" y1="517.5" x2="1097" y2="517.5" stroke="#333" stroke-width="1"/>
<line x1="586" y1="687.5" x2="1097" y2="687.5" stroke="#333" stroke-width="1"/>
<line x1="586.5" y1="517" x2="586.5" y2="691" stroke="#333" stroke-width="1"/>
<line x1="1097.5" y1="517" x2="1097.5" y2="691" stroke="#333" stroke-width="1"/>
<line x1="582" y1="687.5" x2="586" y2="687.5" stroke="#333" stroke-width="1"/>
<text x="579.60" y="692.80" font-size="10" text-anchor="end" fill="#111" >0</text>
<line x1="582" y1="653.5" x2="586" y2="653.5" stroke="#333" stroke-width="1"/>
<text x="579.60" y="658.80" font-size="10" text-anchor="end" fill="#111" >20</text>
<line x1="582" y1="619.5" x2="586" y2="619.5" stroke="#333" stroke-width="1"/>
<text x="579.60" y="624.80" font-size="10" text-anchor="end" fill="#111" >40</text>
<line x1="582" y1="585.5" x2="586" y2="585.5" stroke="#333" stroke-width="1"/>
<text x="579.60" y="590.80" font-size="10" text-anchor="end" fill="#111" >60</text>
<line x1="582" y1="551.5" x2="586" y2="551.5" stroke="#333" stroke-width="1"/>
<text x="579.60" y="556.80" font-size="10" text-anchor="end" fill="#111" >80</text>
<line x1="582" y1="517.5" x2="586" y2="517.5" stroke="#333" stroke-width="1"/>
<text x="579.60" y="522.80" font-size="10" text-anchor="end" fill="#111" >100</text>
<rect x="601.5" y="517.8" width="13" height="169.7" fill="#7ba7cf" stroke="#4682b4" stroke-width="1"/>
<rect x="631.5" y="517.8" width="13" height="169.7" fill="#7ba7cf" stroke="#4682b4" stroke-width="1"/>
<rect x="661.5" y="617.8" width="13" height="69.7" fill="#ffbb44" stroke="#ffa500" stroke-width="1"/>
<rect x="691.5" y="656.7" width="13" height="30.8" fill="#ffbb44" stroke="#ffa500" stroke-width="1"/>
<rect x="721.5" y="538.7" width="13" height="148.8" fill="#7ba7cf" stroke="#4682b4" stroke-width="1"/>
<rect x="751.5" y="539.9" width="13" height="147.6" fill="#7ba7cf" stroke="#4682b4" stroke-width="1"/>
<rect x="781.5" y="518.4" width="13" height="169.1" fill="#7ba7cf" stroke="#4682b4" stroke-width="1"/>
<rect x="811.5" y="520.5" width="13" height="167.0" fill="#7ba7cf" stroke="#4682b4" stroke-width="1"/>
<rect x="841.5" y="517.8" width="13" height="169.7" fill="#7ba7cf" stroke="#4682b4" stroke-width="1"/>
<rect x="871.5" y="517.8" width="13" height="169.7" fill="#7ba7cf" stroke="#4682b4" stroke-width="1"/>
<rect x="901.5" y="522.8" width="13" height="164.7" fill="#7ba7cf" stroke="#4682b4" stroke-width="1"/>
<rect x="931.5" y="519.9" width="13" height="167.6" fill="#7ba7cf" stroke="#4682b4" stroke-width="1"/>
<rect x="961.5" y="517.8" width="13" height="169.7" fill="#7ba7cf" stroke="#4682b4" stroke-width="1"/>
<rect x="991.5" y="517.8" width="13" height="169.7" fill="#7ba7cf" stroke="#4682b4" stroke-width="1"/>
<rect x="1021.5" y="518.4" width="13" height="169.1" fill="#7ba7cf" stroke="#4682b4" stroke-width="1"/>
<rect x="1051.5" y="518.4" width="13" height="169.1" fill="#7ba7cf" stroke="#4682b4" stroke-width="1"/>
<line x1="601.5" y1="653.5" x2="615.5" y2="653.5" stroke="#e4e4e4" stroke-width="1"/>
<line x1="631.5" y1="653.5" x2="645.5" y2="653.5" stroke="#e4e4e4" stroke-width="1"/>
<line x1="661.5" y1="653.5" x2="675.5" y2="653.5" stroke="#e4e4e4" stroke-width="1"/>
<line x1="721.5" y1="653.5" x2="735.5" y2="653.5" stroke="#e4e4e4" stroke-width="1"/>
<line x1="751.5" y1="653.5" x2="765.5" y2="653.5" stroke="#e4e4e4" stroke-width="1"/>
<line x1="781.5" y1="653.5" x2="795.5" y2="653.5" stroke="#e4e4e4" stroke-width="1"/>
<line x1="811.5" y1="653.5" x2="825.5" y2="653.5" stroke="#e4e4e4" stroke-width="1"/>
<line x1="841.5" y1="653.5" x2="855.5" y2="653.5" stroke="#e4e4e4" stroke-width="1"/>
<line x1="871.5" y1="653.5" x2="885.5" y2="653.5" stroke="#e4e4e4" stroke-width="1"/>
<line x1="901.5" y1="653.5" x2="915.5" y2="653.5" stroke="#e4e4e4" stroke-width="1"/>
<line x1="931.5" y1="653.5" x2="945.5" y2="653.5" stroke="#e4e4e4" stroke-width="1"/>
<line x1="961.5" y1="653.5" x2="975.5" y2="653.5" stroke="#e4e4e4" stroke-width="1"/>
<line x1="991.5" y1="653.5" x2="1005.5" y2="653.5" stroke="#e4e4e4" stroke-width="1"/>
<line x1="1021.5" y1="653.5" x2="1035.5" y2="653.5" stroke="#e4e4e4" stroke-width="1"/>
<line x1="1051.5" y1="653.5" x2="1065.5" y2="653.5" stroke="#e4e4e4" stroke-width="1"/>
<line x1="601.5" y1="619.5" x2="615.5" y2="619.5" stroke="#e4e4e4" stroke-width="1"/>
<line x1="631.5" y1="619.5" x2="645.5" y2="619.5" stroke="#e4e4e4" stroke-width="1"/>
<line x1="661.5" y1="619.5" x2="675.5" y2="619.5" stroke="#e4e4e4" stroke-width="1"/>
<line x1="721.5" y1="619.5" x2="735.5" y2="619.5" stroke="#e4e4e4" stroke-width="1"/>
<line x1="751.5" y1="619.5" x2="765.5" y2="619.5" stroke="#e4e4e4" stroke-width="1"/>
<line x1="781.5" y1="619.5" x2="795.5" y2="619.5" stroke="#e4e4e4" stroke-width="1"/>
<line x1="811.5" y1="619.5" x2="825.5" y2="619.5" stroke="#e4e4e4" stroke-width="1"/>
<line x1="841.5" y1="619.5" x2="855.5" y2="619.5" stroke="#e4e4e4" stroke-width="1"/>
<line x1="871.5" y1="619.5" x2="885.5" y2="619.5" stroke="#e4e4e4" stroke-width="1"/>
<line x1="901.5" y1="619.5" x2="915.5" y2="619.5" stroke="#e4e4e4" stroke-width="1"/>
<line x1="931.5" y1="619.5" x2="945.5" y2="619.5" stroke="#e4e4e4" stroke-width="1"/>
<line x1="961.5" y1="619.5" x2="975.5" y2="619.5" stroke="#e4e4e4" stroke-width="1"/>
<line x1="991.5" y1="619.5" x2="1005.5" y2="619.5" stroke="#e4e4e4" stroke-width="1"/>
<line x1="1021.5" y1="619.5" x2="1035.5" y2="619.5" stroke="#e4e4e4" stroke-width="1"/>
<line x1="1051.5" y1="619.5" x2="1065.5" y2="619.5" stroke="#e4e4e4" stroke-width="1"/>
<line x1="601.5" y1="585.5" x2="615.5" y2="585.5" stroke="#e4e4e4" stroke-width="1"/>
<line x1="631.5" y1="585.5" x2="645.5" y2="585.5" stroke="#e4e4e4" stroke-width="1"/>
<line x1="721.5" y1="585.5" x2="735.5" y2="585.5" stroke="#e4e4e4" stroke-width="1"/>
<line x1="751.5" y1="585.5" x2="765.5" y2="585.5" stroke="#e4e4e4" stroke-width="1"/>
<line x1="781.5" y1="585.5" x2="795.5" y2="585.5" stroke="#e4e4e4" stroke-width="1"/>
<line x1="811.5" y1="585.5" x2="825.5" y2="585.5" stroke="#e4e4e4" stroke-width="1"/>
<line x1="841.5" y1="585.5" x2="855.5" y2="585.5" stroke="#e4e4e4" stroke-width="1"/>
<line x1="871.5" y1="585.5" x2="885.5" y2="585.5" stroke="#e4e4e4" stroke-width="1"/>
<line x1="901.5" y1="585.5" x2="915.5" y2="585.5" stroke="#e4e4e4" stroke-width="1"/>
<line x1="931.5" y1="585.5" x2="945.5" y2="585.5" stroke="#e4e4e4" stroke-width="1"/>
<line x1="961.5" y1="585.5" x2="975.5" y2="585.5" stroke="#e4e4e4" stroke-width="1"/>
<line x1="991.5" y1="585.5" x2="1005.5" y2="585.5" stroke="#e4e4e4" stroke-width="1"/>
<line x1="1021.5" y1="585.5" x2="1035.5" y2="585.5" stroke="#e4e4e4" stroke-width="1"/>
<line x1="1051.5" y1="585.5" x2="1065.5" y2="585.5" stroke="#e4e4e4" stroke-width="1"/>
<line x1="601.5" y1="551.5" x2="615.5" y2="551.5" stroke="#e4e4e4" stroke-width="1"/>
<line x1="631.5" y1="551.5" x2="645.5" y2="551.5" stroke="#e4e4e4" stroke-width="1"/>
<line x1="721.5" y1="551.5" x2="735.5" y2="551.5" stroke="#e4e4e4" stroke-width="1"/>
<line x1="751.5" y1="551.5" x2="765.5" y2="551.5" stroke="#e4e4e4" stroke-width="1"/>
<line x1="781.5" y1="551.5" x2="795.5" y2="551.5" stroke="#e4e4e4" stroke-width="1"/>
<line x1="811.5" y1="551.5" x2="825.5" y2="551.5" stroke="#e4e4e4" stroke-width="1"/>
<line x1="841.5" y1="551.5" x2="855.5" y2="551.5" stroke="#e4e4e4" stroke-width="1"/>
<line x1="871.5" y1="551.5" x2="885.5" y2="551.5" stroke="#e4e4e4" stroke-width="1"/>
<line x1="901.5" y1="551.5" x2="915.5" y2="551.5" stroke="#e4e4e4" stroke-width="1"/>
<line x1="931.5" y1="551.5" x2="945.5" y2="551.5" stroke="#e4e4e4" stroke-width="1"/>
<line x1="961.5" y1="551.5" x2="975.5" y2="551.5" stroke="#e4e4e4" stroke-width="1"/>
<line x1="991.5" y1="551.5" x2="1005.5" y2="551.5" stroke="#e4e4e4" stroke-width="1"/>
<line x1="1021.5" y1="551.5" x2="1035.5" y2="551.5" stroke="#e4e4e4" stroke-width="1"/>
<line x1="1051.5" y1="551.5" x2="1065.5" y2="551.5" stroke="#e4e4e4" stroke-width="1"/>
<line x1="609.5" y1="687" x2="609.5" y2="691" stroke="#333" stroke-width="1"/>
<text x="609.30" y="701.00" font-size="10" text-anchor="middle" fill="#111" >NFArchive</text>
<line x1="702.5" y1="687" x2="702.5" y2="691" stroke="#333" stroke-width="1"/>
<text x="702.40" y="701.00" font-size="10" text-anchor="middle" fill="#111" >OperationsManager2012</text>
<line x1="826.5" y1="687" x2="826.5" y2="691" stroke="#333" stroke-width="1"/>
<text x="826.20" y="701.00" font-size="10" text-anchor="middle" fill="#111" >ReportServer2012</text>
<line x1="919.5" y1="687" x2="919.5" y2="691" stroke="#333" stroke-width="1"/>
<text x="918.70" y="701.00" font-size="10" text-anchor="middle" fill="#111" >SolarWindsOrion</text>
<line x1="980.5" y1="687" x2="980.5" y2="691" stroke="#333" stroke-width="1"/>
<text x="980.40" y="701.00" font-size="10" text-anchor="middle" fill="#111" >master</text>
<line x1="1042.5" y1="687" x2="1042.5" y2="691" stroke="#333" stroke-width="1"/>
<text x="1042.30" y="701.00" font-size="10" text-anchor="middle" fill="#111" >msdb</text>
<polygon points="341.0,53.0 348.0,43.0 388.0,43.0 388.0,63.0 348.0,63.0" fill="#4682b4"/>
<text x="368.00" y="58.20" font-size="12" text-anchor="middle" fill="#fff" font-weight="bold" >0.47</text>
<polygon points="341.0,55.0 348.0,45.0 378.0,45.0 378.0,65.0 348.0,65.0" fill="#ffa500"/>
<text x="363.00" y="60.20" font-size="12" text-anchor="middle" fill="#fff" font-weight="bold" >82</text>
<polygon points="727.0,58.0 734.0,48.0 764.0,48.0 764.0,68.0 734.0,68.0" fill="#4682b4"/>
<text x="749.00" y="63.20" font-size="12" text-anchor="middle" fill="#fff" font-weight="bold" >40</text>
<polygon points="341.0,421.5 348.0,411.5 396.0,411.5 396.0,431.5 348.0,431.5" fill="#4682b4"/>
<text x="372.00" y="426.70" font-size="12" text-anchor="middle" fill="#fff" font-weight="bold" >0.034</text>
<polygon points="341.0,417.0 348.0,407.0 396.0,407.0 396.0,427.0 348.0,427.0" fill="#ffa500"/>
<text x="372.00" y="422.20" font-size="12" text-anchor="middle" fill="#fff" font-weight="bold" >0.063</text>
<polygon points="341.0,426.5 348.0,416.5 372.0,416.5 372.0,436.5 348.0,436.5" fill="#228b22"/>
<text x="360.00" y="431.70" font-size="12" text-anchor="middle" fill="#fff" font-weight="bold" >0</text>
<polygon points="341.5,295.0 348.5,285.0 388.0,285.0 388.0,305.0 348.5,305.0" fill="#8a2be2"/>
<text x="368.25" y="300.20" font-size="12" text-anchor="middle" fill="#fff" font-weight="bold" >8.1k</text>
<polygon points="727.0,318.0 734.0,308.0 757.0,308.0 757.0,328.0 734.0,328.0" fill="#4682b4"/>
<text x="745.50" y="323.20" font-size="12" text-anchor="middle" fill="#fff" font-weight="bold" >3</text>
<polygon points="727.0,381.0 734.0,371.0 767.0,371.0 767.0,391.0 734.0,391.0" fill="#ffa500"/>
<text x="750.50" y="386.20" font-size="12" text-anchor="middle" fill="#fff" font-weight="bold" >1.2</text></svg>
</body></html>
